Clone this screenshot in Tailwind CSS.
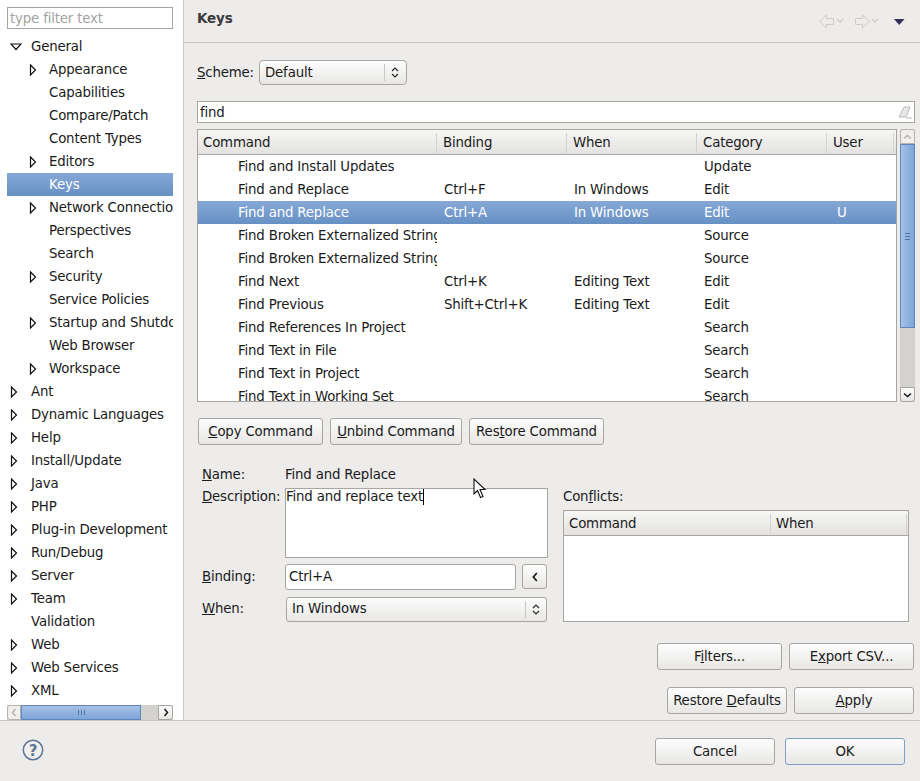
<!DOCTYPE html>
<html lang="en">
<head>
    <meta charset="UTF-8">
    <title>Preferences - Keys</title>
    <script src="https://cdn.jsdelivr.net/npm/@tailwindcss/browser@4"></script>
</head>
<body class="bg-[#edeceb]">
<div class="relative w-[920px] h-[781px] overflow-hidden flex flex-col bg-[#edeceb] text-[#1a1a1a] text-[13.33px] tracking-[-0.17px] font-['DejaVu_Sans',sans-serif]">
    <div class="flex h-[721px] border-b border-[#c9c7c4]">
        <!-- tree side -->
        <aside class="w-[184px] shrink-0 bg-white border-r border-[#c9c7c4] flex flex-col pl-[7px] pr-[10px] pt-[7px]">
            <div class="h-[22px] w-[166px] border border-[#a8a6a2] flex items-center pl-[2px] pt-[2px] text-[#a3a3a3]">type filter text</div>
            <div id="tree" class="mt-[6px] w-[166px]"></div>
            <div class="mt-[3px] h-[15px] w-[166px] flex bg-[#d3d2cf]">
                <div class="w-[14px] h-full rounded-l-[3px] border border-[#b5b3af] bg-[#f0efee] flex items-center justify-center">
                    <svg width="6" height="9" viewBox="0 0 6 9"><path d="M4.5 1 L1.5 4.5 L4.5 8" fill="none" stroke="#b5b3af" stroke-width="1.4"/></svg>
                </div>
                <div class="w-[120px] h-full border border-[#5f87bd] bg-gradient-to-b from-[#a5c1e6] to-[#7fa5d8] flex items-center justify-center gap-[2px]">
                    <i class="w-px h-[5px] bg-[#4f74a8]"></i><i class="w-px h-[5px] bg-[#4f74a8]"></i><i class="w-px h-[5px] bg-[#4f74a8]"></i>
                </div>
                <div class="flex-1"></div>
                <div class="w-[15px] h-full rounded-r-[3px] border border-[#a8a6a2] bg-gradient-to-b from-[#fdfdfd] to-[#e8e7e5] flex items-center justify-center">
                    <svg width="6" height="9" viewBox="0 0 6 9"><path d="M1.5 1 L4.5 4.5 L1.5 8" fill="none" stroke="#1a1a1a" stroke-width="1.5"/></svg>
                </div>
            </div>
        </aside>

        <main class="flex-1 min-w-0 flex flex-col">
            <header class="h-[43px] shrink-0 border-b border-[#c9c7c4] flex items-start justify-between pl-[13px] pr-[15px]">
                <h1 class="font-bold text-[13.5px] text-[#3a3a3a] leading-[22px] pt-[7px]">Keys</h1>
                <div class="flex items-center pt-[14px]">
                    <svg width="26" height="15" viewBox="0 0 26 15" fill="none" stroke="#cfcdca"><path d="M0.5 7.5 L7.5 1 V4.5 H14.5 V10.5 H7.5 V14 Z"/><path d="M18 5 L21 8 L24 5" stroke-width="1.3"/></svg>
                    <svg class="ml-[10px]" width="26" height="15" viewBox="0 0 26 15" fill="none" stroke="#cfcdca"><path d="M14.5 7.5 L7.5 1 V4.5 H0.5 V10.5 H7.5 V14 Z"/><path d="M17 5 L20 8 L23 5" stroke-width="1.3"/></svg>
                    <svg class="ml-[13px]" width="11" height="6" viewBox="0 0 11 6"><path d="M0 0 H10.5 L5.2 6 Z" fill="#33315a"/></svg>
                </div>
            </header>

            <div class="flex-1 flex flex-col pl-[13px] pr-[5px]">
                <div class="flex items-center mt-[17px] h-[25px]">
                    <span class="w-[62px]"><u>S</u>cheme:</span>
                    <div class="w-[148px] h-[25px] flex items-center rounded-[4px] border border-[#a8a6a2] bg-gradient-to-b from-[#fdfdfd] to-[#e8e7e5] pl-[5px]">
                        <span class="flex-1">Default</span>
                        <i class="w-px h-[17px] bg-[#c9c7c4]"></i>
                        <svg class="ml-[6px] mr-[7px]" width="8" height="13" viewBox="0 0 8 13" fill="none" stroke="#2a2a2a" stroke-width="1.2"><path d="M1 5 L4 2 L7 5"/><path d="M1 8 L4 11 L7 8"/></svg>
                    </div>
                </div>

                <div class="mt-[16px] h-[22px] border border-[#a8a6a2] bg-white flex items-center pl-[2px] justify-between">
                    <span class="pt-[2px]">find</span>
                    <svg class="mr-[1px]" width="15" height="14" viewBox="0 0 15 14" fill="none"><path d="M1 12 L6 2 H12 L8 12 Z" fill="#e8e7e5" stroke="#bdbbb8"/><path d="M8 13 H14" stroke="#bdbbb8"/></svg>
                </div>

                <div class="mt-[6px] h-[273px] flex justify-between">
                    <div class="w-[700px] border border-[#a8a6a2] bg-white overflow-hidden">
                        <div class="h-[25px] pt-[2px] flex items-center border-b border-[#a8a6a2] bg-gradient-to-b from-[#f7f7f6] to-[#e3e2e0]">
                            <div class="w-[238px] pl-[5px]">Command</div>
                            <div class="w-[130px] pl-[6px] border-l border-[#d3d2cf]">Binding</div>
                            <div class="w-[130px] pl-[6px] border-l border-[#d3d2cf]">When</div>
                            <div class="w-[130px] pl-[6px] border-l border-[#d3d2cf]">Category</div>
                            <div class="w-[68px] pl-[6px] border-x border-[#d3d2cf]">User</div>
                        </div>
                        <div id="rows"></div>
                    </div>
                    <div class="w-[15px] flex flex-col bg-[#d3d2cf]">
                        <div class="h-[15px] shrink-0 rounded-t-[3px] border border-[#b5b3af] bg-[#f0efee] flex items-center justify-center">
                            <svg width="9" height="6" viewBox="0 0 9 6"><path d="M1 4.5 L4.5 1.5 L8 4.5" fill="none" stroke="#b5b3af" stroke-width="1.4"/></svg>
                        </div>
                        <div class="h-[184px] shrink-0 border border-[#5f87bd] bg-gradient-to-r from-[#a5c1e6] to-[#7fa5d8] flex flex-col items-center justify-center gap-[2px]">
                            <i class="h-px w-[5px] bg-[#4f74a8]"></i><i class="h-px w-[5px] bg-[#4f74a8]"></i><i class="h-px w-[5px] bg-[#4f74a8]"></i>
                        </div>
                        <div class="flex-1"></div>
                        <div class="h-[15px] shrink-0 rounded-b-[3px] border border-[#a8a6a2] bg-gradient-to-b from-[#fdfdfd] to-[#e8e7e5] flex items-center justify-center">
                            <svg width="9" height="6" viewBox="0 0 9 6"><path d="M1 1.5 L4.5 4.5 L8 1.5" fill="none" stroke="#1a1a1a" stroke-width="1.5"/></svg>
                        </div>
                    </div>
                </div>

                <div class="mt-[16px] ml-[1px] flex gap-[7px]">
                    <button class="w-[125px] h-[27px] rounded-[3px] border border-[#a8a6a2] bg-gradient-to-b from-[#fdfdfd] to-[#e8e7e5]"><u>C</u>opy Command</button>
                    <button class="w-[132px] h-[27px] rounded-[3px] border border-[#a8a6a2] bg-gradient-to-b from-[#fdfdfd] to-[#e8e7e5]"><u>U</u>nbind Command</button>
                    <button class="w-[135px] h-[27px] rounded-[3px] border border-[#a8a6a2] bg-gradient-to-b from-[#fdfdfd] to-[#e8e7e5]">Res<u>t</u>ore Command</button>
                </div>

                <div class="mt-[18px] flex">
                    <div class="w-[351px] pl-[5px] grid grid-cols-[83px_1fr]">
                        <div class="h-[22px] pt-[2px] flex items-center"><span><u>N</u>ame:</span></div>
                        <div class="h-[22px] pt-[2px] flex items-center">Find and Replace</div>

                        <div class="mt-[3px] h-[70px] leading-[17px]"><u>D</u>escription:</div>
                        <div class="mt-[3px] h-[70px] border border-[#a8a6a2] bg-white leading-[16px]">Find and replace text<span class="inline-block w-px h-[16px] bg-black align-top"></span></div>

                        <div class="mt-[5px] h-[26px] flex items-center"><span><u>B</u>inding:</span></div>
                        <div class="mt-[5px] h-[26px] flex items-center justify-between">
                            <div class="w-[231px] h-[26px] rounded-[3px] border border-[#a8a6a2] bg-white flex items-center pl-[3px]">Ctrl+A</div>
                            <button class="w-[25px] h-[25px] mr-[1px] rounded-[3px] border border-[#a8a6a2] bg-gradient-to-b from-[#fdfdfd] to-[#e8e7e5] flex items-center justify-center">
                                <svg width="6" height="10" viewBox="0 0 6 10"><path d="M4.8 1 L1.4 5 L4.8 9" fill="none" stroke="#1a1a1a" stroke-width="1.7"/></svg>
                            </button>
                        </div>

                        <div class="mt-[7px] h-[25px] flex items-center"><span><u>W</u>hen:</span></div>
                        <div class="mt-[7px] h-[25px] ml-[1px] mr-[1px] flex items-center rounded-[3px] border border-[#a8a6a2] bg-gradient-to-b from-[#fdfdfd] to-[#e8e7e5] pl-[5px]">
                            <span class="flex-1">In Windows</span>
                            <i class="w-px h-[17px] bg-[#c9c7c4]"></i>
                            <svg class="mx-[6px]" width="8" height="13" viewBox="0 0 8 13" fill="none" stroke="#2a2a2a" stroke-width="1.2"><path d="M1 5 L4 2 L7 5"/><path d="M1 8 L4 11 L7 8"/></svg>
                        </div>
                    </div>

                    <div class="ml-[15px] w-[346px] pt-[25px]">
                        <div class="h-[22px] leading-[17px]">Con<u>f</u>licts:</div>
                        <div class="h-[112px] border border-[#a8a6a2] bg-white">
                            <div class="h-[25px] pt-[2px] flex items-center border-b border-[#a8a6a2] bg-gradient-to-b from-[#f7f7f6] to-[#e3e2e0]">
                                <div class="w-[206px] pl-[5px]">Command</div>
                                <div class="w-[137px] pl-[5px] border-x border-[#d3d2cf]">When</div>
                            </div>
                        </div>
                    </div>
                </div>

                <div class="mt-[21px] mr-[1px] flex justify-end gap-[7px]">
                    <button class="w-[125px] h-[27px] rounded-[3px] border border-[#a8a6a2] bg-gradient-to-b from-[#fdfdfd] to-[#e8e7e5]">F<u>i</u>lters...</button>
                    <button class="w-[125px] h-[27px] rounded-[3px] border border-[#a8a6a2] bg-gradient-to-b from-[#fdfdfd] to-[#e8e7e5]">E<u>x</u>port CSV...</button>
                </div>
                <div class="mt-[17px] mr-[1px] flex justify-end gap-[7px]">
                    <button class="w-[120px] h-[27px] rounded-[3px] border border-[#a8a6a2] bg-gradient-to-b from-[#fdfdfd] to-[#e8e7e5]">Restore <u>D</u>efaults</button>
                    <button class="w-[120px] h-[27px] rounded-[3px] border border-[#a8a6a2] bg-gradient-to-b from-[#fdfdfd] to-[#e8e7e5]"><u>A</u>pply</button>
                </div>
            </div>
        </main>
    </div>

    <footer class="flex-1 flex items-start justify-between pl-[22px] pr-[15px] pt-[17px]">
        <svg class="mt-[1px]" width="22" height="22" viewBox="0 0 22 22">
            <circle cx="11" cy="11" r="9.7" fill="#f0efee" stroke="#5d7597" stroke-width="1.5"/>
            <text x="11" y="16.5" text-anchor="middle" font-family="DejaVu Sans" font-weight="bold" font-size="15" fill="#5d7597">?</text>
        </svg>
        <div class="flex gap-[10px]">
            <button class="w-[120px] h-[27px] rounded-[3px] border border-[#a8a6a2] bg-gradient-to-b from-[#fdfdfd] to-[#e8e7e5]">Cancel</button>
            <button class="w-[120px] h-[27px] rounded-[3px] border border-[#7f9fc6] bg-gradient-to-b from-[#fdfdfd] to-[#e8e7e5]">OK</button>
        </div>
    </footer>

    <!-- mouse pointer -->
    <svg class="absolute left-[473px] top-[478px]" width="14" height="21" viewBox="0 0 14 21">
        <path d="M1 1 V16 L4.5 12.5 L7.5 19.5 L10 18.5 L7 11.5 H12 Z" fill="#ffffff" stroke="#111111" stroke-width="1.1"/>
    </svg>
</div>

<script>
    const arrowRight = `<svg width="8" height="12" viewBox="0 0 8 12"><path d="M1.5 1 L6.5 6 L1.5 11 Z" fill="#fff" stroke="#111" stroke-width="1.2"/></svg>`;
    const arrowDown = `<svg width="12" height="8" viewBox="0 0 12 8"><path d="M1 1 H11 L6 6.5 Z" fill="#fff" stroke="#111" stroke-width="1.2"/></svg>`;

    // [label, depth, kind]  kind: r = collapsed, d = expanded, "" = leaf
    const tree = [
        ["General", 0, "d"], ["Appearance", 1, "r"], ["Capabilities", 1, ""], ["Compare/Patch", 1, ""],
        ["Content Types", 1, ""], ["Editors", 1, "r"], ["Keys", 1, ""], ["Network Connections", 1, "r"],
        ["Perspectives", 1, ""], ["Search", 1, ""], ["Security", 1, "r"], ["Service Policies", 1, ""],
        ["Startup and Shutdown", 1, "r"], ["Web Browser", 1, ""], ["Workspace", 1, "r"], ["Ant", 0, "r"],
        ["Dynamic Languages", 0, "r"], ["Help", 0, "r"], ["Install/Update", 0, "r"], ["Java", 0, "r"],
        ["PHP", 0, "r"], ["Plug-in Development", 0, "r"], ["Run/Debug", 0, "r"], ["Server", 0, "r"],
        ["Team", 0, "r"], ["Validation", 0, ""], ["Web", 0, "r"], ["Web Services", 0, "r"], ["XML", 0, "r"]
    ];

    document.getElementById("tree").innerHTML = tree.map(([label, depth, kind]) => {
        const selected = label === "Keys";
        const icon = kind === "r" ? arrowRight : kind === "d" ? arrowDown : "";
        return `
            <div class="h-[23px] flex items-center whitespace-nowrap overflow-hidden ${selected ? "bg-gradient-to-b from-[#86a8d6] to-[#6690c4] text-white" : ""}">
                <span class="${depth ? "w-[42px] pl-[22px]" : "w-[24px] pl-[3px]"} shrink-0 flex items-center">${icon}</span><span>${label}</span>
            </div>`;
    }).join("");

    const rows = [
        ["Find and Install Updates", "", "", "Update", ""],
        ["Find and Replace", "Ctrl+F", "In Windows", "Edit", ""],
        ["Find and Replace", "Ctrl+A", "In Windows", "Edit", "U"],
        ["Find Broken Externalized Strings", "", "", "Source", ""],
        ["Find Broken Externalized Strings", "", "", "Source", ""],
        ["Find Next", "Ctrl+K", "Editing Text", "Edit", ""],
        ["Find Previous", "Shift+Ctrl+K", "Editing Text", "Edit", ""],
        ["Find References In Project", "", "", "Search", ""],
        ["Find Text in File", "", "", "Search", ""],
        ["Find Text in Project", "", "", "Search", ""],
        ["Find Text in Working Set", "", "", "Search", ""]
    ];

    document.getElementById("rows").innerHTML = rows.map((r, i) => `
        <div class="h-[23px] flex items-center whitespace-nowrap ${i === 2 ? "bg-gradient-to-b from-[#86a8d6] to-[#6690c4] text-white" : ""}">
            <div class="w-[239px] pl-[40px] overflow-hidden">${r[0]}</div>
            <div class="w-[130px] pl-[7px]">${r[1]}</div>
            <div class="w-[130px] pl-[7px]">${r[2]}</div>
            <div class="w-[130px] pl-[7px]">${r[3]}</div>
            <div class="w-[68px] pl-[10px]">${r[4]}</div>
        </div>`).join("");
</script>
</body>
</html>
